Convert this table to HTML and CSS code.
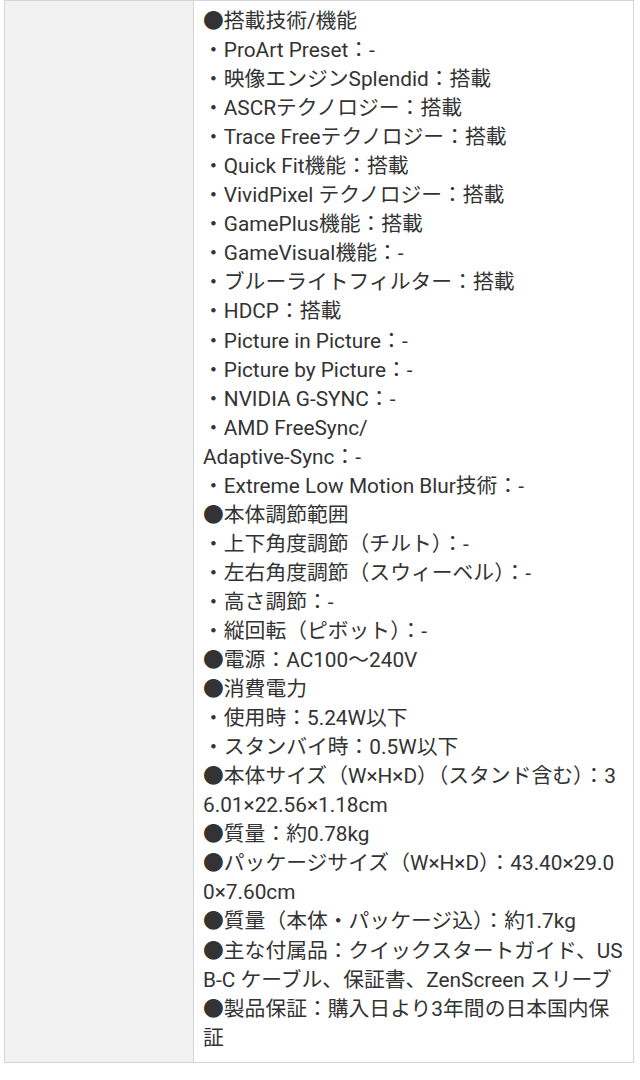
FILE: index.html
```html
<!DOCTYPE html>
<html lang="ja">
<head>
<meta charset="utf-8">
<link rel="stylesheet" href="styles.css">
</head>
<body>
<table class="spec">
<tr>
<th class="label"></th>
<td class="value">●搭載技術/機能<br>・ProArt Preset：-<br>・映像エンジンSplendid：搭載<br>・ASCRテクノロジー：搭載<br>・Trace Freeテクノロジー：搭載<br>・Quick Fit機能：搭載<br>・VividPixel テクノロジー：搭載<br>・GamePlus機能：搭載<br>・GameVisual機能：-<br>・ブルーライトフィルター：搭載<br>・HDCP：搭載<br>・Picture in Picture：-<br>・Picture by Picture：-<br>・NVIDIA G-SYNC：-<br>・AMD FreeSync/<br>Adaptive-Sync：-<br>・Extreme Low Motion Blur技術：-<br>●本体調節範囲<br>・上下角度調節（チルト）：-<br>・左右角度調節（スウィーベル）：-<br>・高さ調節：-<br>・縦回転（ピボット）：-<br>●電源：AC100～240V<br>●消費電力<br>・使用時：5.24W以下<br>・スタンバイ時：0.5W以下<br>●本体サイズ（W×H×D）（スタンド含む）：3<br>6.01×22.56×1.18cm<br>●質量：約0.78kg<br>●パッケージサイズ（W×H×D）：43.40×29.0<br>0×7.60cm<br>●質量（本体・パッケージ込）：約1.7kg<br>●主な付属品：クイックスタートガイド、US<br>B-C ケーブル、保証書、ZenScreen スリーブ<br>●製品保証：購入日より3年間の日本国内保<br>証</td>
</tr>
</table>
</body>
</html>
```
FILE: styles.css
```css
html, body {
  margin: 0;
  padding: 0;
  background: #ffffff;
}
.spec {
  margin-left: 4px;
  width: 630px;
  border-collapse: collapse;
  border: 1px solid #d4d4d4;
}
.label {
  width: 188px;
  background: #f2f2f2;
  border: 1px solid #d4d4d4;
  padding: 0;
}
.value {
  border: 1px solid #d4d4d4;
  padding: 6px 8px 9px 9px;
  font-family: Roboto, "Noto Sans CJK JP", sans-serif;
  font-size: 20.8px;
  line-height: 29.05px;
  color: #333333;
  white-space: nowrap;
}
```
